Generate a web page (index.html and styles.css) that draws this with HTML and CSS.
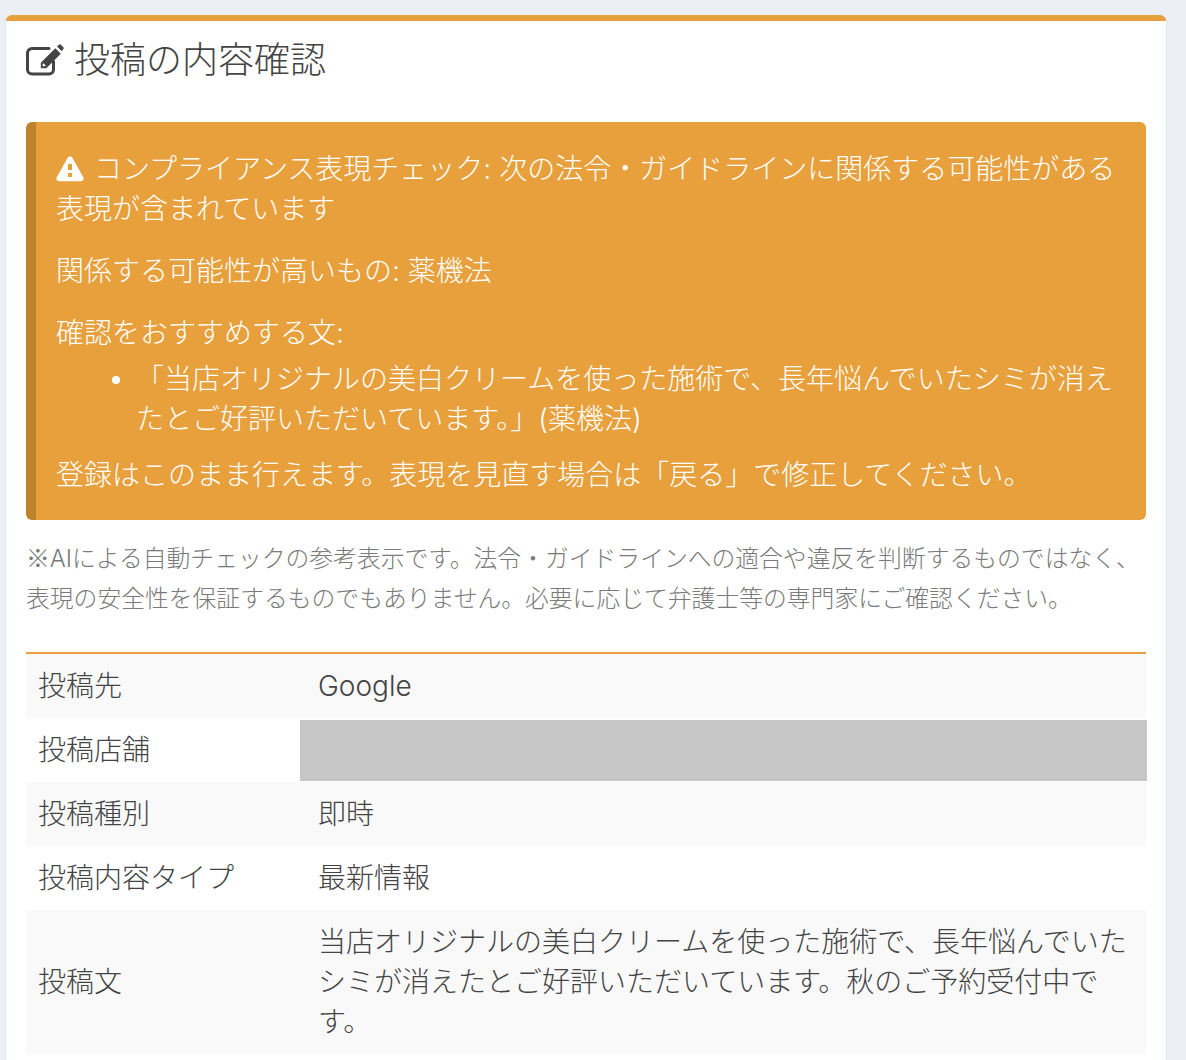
FILE: index.html
```html
<!DOCTYPE html>
<html lang="ja">
<head>
<meta charset="utf-8">
<title>投稿の内容確認</title>
<link rel="stylesheet" href="styles.css">
</head>
<body>
<main class="card">
  <h1 class="title">
    <svg class="title-icon" viewBox="0 0 38 32" aria-hidden="true">
      <path class="edit-box" d="M23 4.500H6A4.500 4.500 0 0 0 1.500 9V25.500A4.500 4.500 0 0 0 6 30H23A4.500 4.500 0 0 0 27.500 25.500V17.500"/>
      <path class="edit-pen" fill-rule="evenodd" d="M29.300 4.200 34.800 9.700 20.300 24.200H14.800V18.700ZM17.500 19.300 16.700 20.100V22.300H18.900L19.700 21.500Z"/>
      <path class="edit-tip" d="M31 2.500 32.600.9a1.700 1.700 0 0 1 2.400 0L37.100 3a1.700 1.700 0 0 1 0 2.400L35.500 7Z"/>
    </svg>
    <span>投稿の内容確認</span>
  </h1>

  <section class="alert">
    <p class="alert-line">
      <svg class="warn-icon" viewBox="0 0 28 26" aria-hidden="true"><path fill-rule="evenodd" d="M14 .500c1 0 1.800.5 2.300 1.300l11 19.500c1 1.800-.3 4-2.300 4H3c-2 0-3.300-2.200-2.300-4l11-19.500C12.200 1 13 .500 14 .500ZM12 8v6h4V8Zm0 9v4h4v-4Z"/></svg>
      コンプライアンス表現チェック: 次の法令・ガイドラインに関係する可能性がある表現が含まれています
    </p>
    <p class="alert-line">関係する可能性が高いもの: 薬機法</p>
    <p class="alert-tight">確認をおすすめする文:</p>
    <ul class="alert-list">
      <li>「当店オリジナルの美白クリームを使った施術で、長年悩んでいたシミが消えたとご好評いただいています。」(薬機法)</li>
    </ul>
    <p class="alert-last">登録はこのまま行えます。表現を見直す場合は「戻る」で修正してください。</p>
  </section>

  <p class="note"><span class="cjk">※</span>AIによる自動チェックの参考表示です。法令・ガイドラインへの適合や違反を判断するものではなく、<br>表現の安全性を保証するものでもありません。必要に応じて弁護士等の専門家にご確認ください。</p>

  <table class="detail">
    <tbody>
      <tr><th>投稿先</th><td>Google</td></tr>
      <tr><th>投稿店舗</th><td class="redacted"></td></tr>
      <tr><th>投稿種別</th><td>即時</td></tr>
      <tr><th>投稿内容タイプ</th><td>最新情報</td></tr>
      <tr><th>投稿文</th><td>当店オリジナルの美白クリームを使った施術で、長年悩んでいたシミが消えたとご好評いただいています。秋のご予約受付中です。</td></tr>
    </tbody>
  </table>
</main>
</body>
</html>
```

FILE: styles.css
```css
* { box-sizing: border-box; }
html, body { height: 100%; }
body {
  margin: 0;
  padding: 15px 20px 0 6px;
  background: #ecf0f5;
  color: #444;
  font-family: Inter, "Noto Sans CJK JP", sans-serif;
  font-weight: 300;
  font-size: 28px;
  line-height: 40px;
  overflow: hidden;
}
.cjk { font-family: "Noto Sans CJK JP", sans-serif; line-height: 0; }
.card {
  background: #fff;
  border-top: 6px solid #e7a03c;
  border-radius: 6px 6px 0 0;
  padding: 0 20px;
  min-height: 1100px;
  box-shadow: 0 1px 2px rgba(0, 0, 0, .12);
}
.title {
  display: flex;
  align-items: center;
  margin: 0;
  height: 101px;
  padding-bottom: 23px;
  font-size: 36px;
  font-weight: 300;
  line-height: 40px;
  color: #444;
}
.title-icon { width: 38px; height: 32px; margin-right: 10px; flex: none; }
.edit-box { fill: none; stroke: #444; stroke-width: 3; stroke-linecap: round; }
.edit-pen, .edit-tip { fill: #444; }
.alert {
  background: #e7a03c;
  border-left: 10px solid #bd832c;
  border-radius: 6px;
  color: #fff;
  padding: 27px 20px 26px 20px;
  height: 398px;
}
.alert p { margin: 0; }
.alert .alert-line { margin-bottom: 22px; }
.warn-icon { width: 28px; height: 26px; fill: #fff; vertical-align: -3px; margin-right: 2px; }
.alert-list { margin: 6px 0 16px; padding: 0 0 0 80px; list-style: none; }
.alert-list li { position: relative; }
.alert-list li::before {
  content: "";
  position: absolute;
  left: -24px;
  top: 17px;
  width: 8px;
  height: 8px;
  border-radius: 50%;
  background: #fff;
}
.note { margin: 19px 0 33px; color: #7a7a7a; font-size: 23.800px; }
.detail { width: 100%; border-collapse: collapse; border-top: 2px solid #e7a03c; table-layout: fixed; }
.detail th, .detail td { padding: 12px 13px; font-weight: 300; text-align: left; vertical-align: middle; }
.detail th { width: 279px; padding-left: 12px; }
.detail tr:nth-child(odd) { background: #f9f9f9; }
.redacted { position: relative; }
.redacted::after {
  content: "";
  position: absolute;
  left: -5px;
  right: -1px;
  top: 2px;
  bottom: 1px;
  background: #c6c6c6;
}
```
